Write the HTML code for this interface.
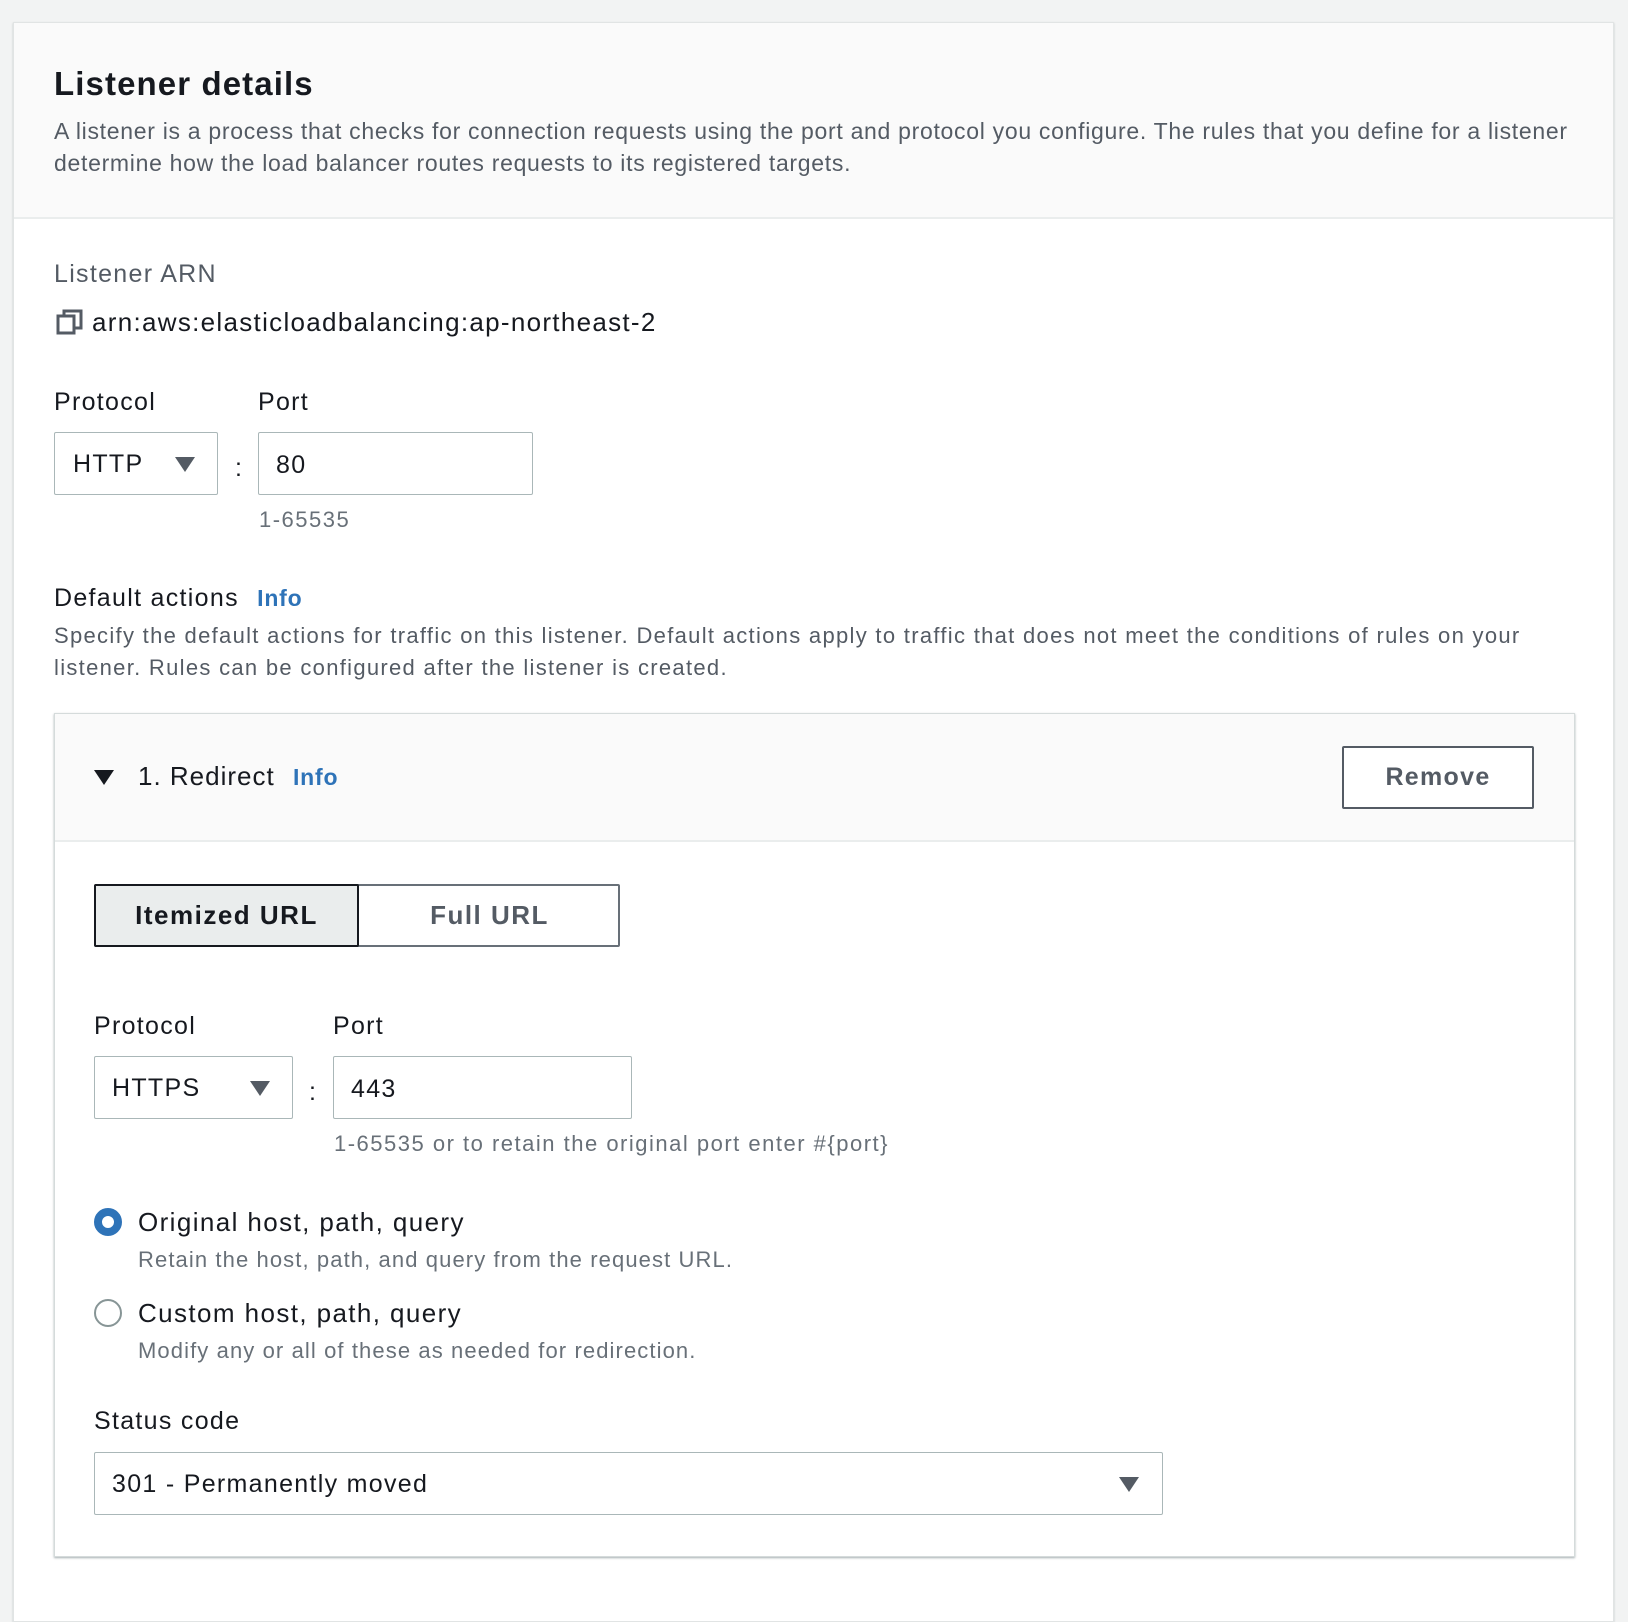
<!DOCTYPE html>
<html><head><meta charset="utf-8"><style>
*{box-sizing:border-box;margin:0;padding:0}
body{width:1628px;height:1588px;background:#f2f3f3;font-family:"Liberation Sans",sans-serif;color:#16191f;position:relative;overflow:hidden;letter-spacing:1.3px}
.a{position:absolute;white-space:nowrap}
.card{position:absolute;left:13px;top:22px;width:1601px;height:1600px;background:#fff;border:1px solid #e1e4e4;box-shadow:0 1px 2px rgba(0,28,36,.2)}
.hdr{position:absolute;left:14px;top:23px;width:1599px;height:196px;background:#fafafa;border-bottom:2px solid #eaeded}
.box{position:absolute;border:1px solid #aab7b8;border-radius:2px;background:#fff}
.t{font-size:25px;line-height:32px}
.g{color:#545b64}
.s{font-size:22px;line-height:30px;color:#687078;letter-spacing:1.5px}
.tri{position:absolute;width:0;height:0;border-left:10px solid transparent;border-right:10px solid transparent;border-top:15px solid #545b64}
.info{color:#2e73b8;font-weight:bold;font-size:23px;letter-spacing:0.8px}
</style></head><body>
<div class="card"></div>
<div class="hdr"></div>
<div class="a" style="left:54px;top:64px;font-size:33px;line-height:40px;font-weight:bold;letter-spacing:1.1px">Listener details</div>
<div class="a g" style="left:54px;top:115px;font-size:23px;line-height:32px;letter-spacing:0.7px">A listener is a process that checks for connection requests using the port and protocol you configure. The rules that you define for a listener<br>determine how the load balancer routes requests to its registered targets.</div>

<div class="a t g" style="left:54px;top:258px">Listener ARN</div>
<svg class="a" style="left:56px;top:308px" width="28" height="28" viewBox="0 0 28 28"><rect x="2" y="8" width="16" height="17" fill="none" stroke="#545b64" stroke-width="3"/><path d="M8 8V3h17v17h-7" fill="none" stroke="#545b64" stroke-width="3"/></svg>
<div class="a t" style="left:92px;top:306px;font-size:26px">arn:aws:elasticloadbalancing:ap-northeast-2</div>

<div class="a t" style="left:54px;top:386px">Protocol</div>
<div class="a t" style="left:258px;top:386px">Port</div>
<div class="box" style="left:54px;top:432px;width:164px;height:63px"></div>
<div class="a t" style="left:73px;top:448px">HTTP</div>
<div class="tri" style="left:175px;top:457px"></div>
<div class="a t" style="left:235px;top:452px">:</div>
<div class="box" style="left:258px;top:432px;width:275px;height:63px"></div>
<div class="a t" style="left:276px;top:449px">80</div>
<div class="a s" style="left:259px;top:505px">1-65535</div>

<div class="a t" style="left:54px;top:582px">Default actions <span class="info" style="margin-left:10px">Info</span></div>
<div class="a g" style="left:54px;top:620px;font-size:22px;line-height:32px;letter-spacing:1.3px">Specify the default actions for traffic on this listener. Default actions apply to traffic that does not meet the conditions of rules on your<br>listener. Rules can be configured after the listener is created.</div>

<div style="position:absolute;left:54px;top:713px;width:1521px;height:844px;background:#fff;border:1px solid #d5dbdb;box-shadow:0 1px 2px rgba(0,28,36,.35)"></div>
<div style="position:absolute;left:55px;top:714px;width:1519px;height:128px;background:#fafafa;border-bottom:2px solid #eaeded"></div>
<div class="tri" style="left:94px;top:770px;border-top-color:#16191f"></div>
<div class="a t" style="left:138px;top:760px;font-size:26px;letter-spacing:1px">1. Redirect <span class="info" style="margin-left:10px">Info</span></div>
<div style="position:absolute;left:1342px;top:746px;width:192px;height:63px;border:2px solid #545b64;border-radius:2px;background:#fff;color:#545b64;font-weight:bold;font-size:25px;line-height:59px;text-align:center">Remove</div>

<div style="position:absolute;left:94px;top:884px;width:526px;height:63px;border:2px solid #687078;border-radius:2px;background:#fff"></div>
<div style="position:absolute;left:94px;top:884px;width:265px;height:63px;border:2px solid #16191f;border-radius:2px;background:#eaeded;font-weight:bold;font-size:26px;line-height:59px;text-align:center;letter-spacing:1.5px">Itemized URL</div>
<div class="a" style="left:359px;top:884px;width:261px;font-weight:bold;font-size:26px;line-height:63px;text-align:center;color:#545b64;letter-spacing:1.5px">Full URL</div>

<div class="a t" style="left:94px;top:1010px">Protocol</div>
<div class="a t" style="left:333px;top:1010px">Port</div>
<div class="box" style="left:94px;top:1056px;width:199px;height:63px"></div>
<div class="a t" style="left:112px;top:1072px">HTTPS</div>
<div class="tri" style="left:250px;top:1081px"></div>
<div class="a t" style="left:309px;top:1076px">:</div>
<div class="box" style="left:333px;top:1056px;width:299px;height:63px"></div>
<div class="a t" style="left:351px;top:1073px">443</div>
<div class="a s" style="left:334px;top:1129px">1-65535 or to retain the original port enter #{port}</div>

<div style="position:absolute;left:94px;top:1208px;width:28px;height:28px;border-radius:50%;border:8px solid #2e73b8;background:#fff"></div>
<div class="a t" style="left:138px;top:1206px;font-size:26px;letter-spacing:1.4px">Original host, path, query</div>
<div class="a s" style="left:138px;top:1245px;letter-spacing:1.1px">Retain the host, path, and query from the request URL.</div>
<div style="position:absolute;left:94px;top:1299px;width:28px;height:28px;border-radius:50%;border:2px solid #879596;background:#fff"></div>
<div class="a t" style="left:138px;top:1297px;font-size:26px;letter-spacing:1.4px">Custom host, path, query</div>
<div class="a s" style="left:138px;top:1336px;letter-spacing:1.1px">Modify any or all of these as needed for redirection.</div>

<div class="a t" style="left:94px;top:1405px">Status code</div>
<div class="box" style="left:94px;top:1452px;width:1069px;height:63px"></div>
<div class="a t" style="left:112px;top:1468px">301 - Permanently moved</div>
<div class="tri" style="left:1119px;top:1477px"></div>
</body></html>
